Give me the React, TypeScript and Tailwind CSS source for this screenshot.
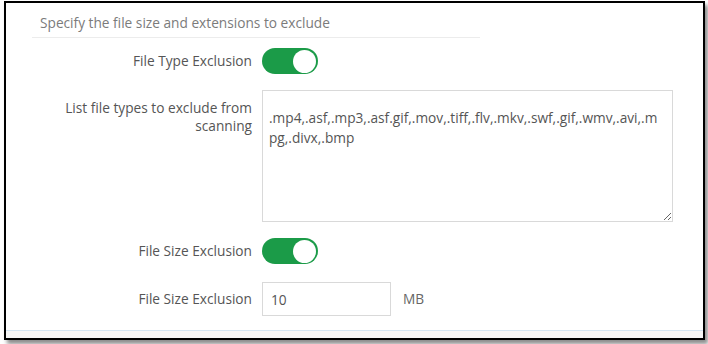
import React from 'react';

const fileTypes =
  '.mp4,.asf,.mp3,.asf.gif,.mov,.tiff,.flv,.mkv,.swf,.gif,.wmv,.avi,.mpg,.divx,.bmp';

const Toggle = ({ on }: { on: boolean }) => (
  <div
    className={`flex h-[26px] w-[56px] items-center rounded-full px-[2px] ${
      on ? 'justify-end bg-[#1b9b48]' : 'justify-start bg-[#cccccc]'
    }`}
  >
    <div className="h-[23px] w-[23px] rounded-full bg-white" />
  </div>
);

const App = () => {
  return (
    <div
      className="h-[344px] w-[708px] bg-white pl-[4px] pt-[1px]"
      style={{ fontFamily: '"Open Sans", "Noto Sans", sans-serif' }}
    >
      <div className="flex h-[339px] w-[701px] flex-col border-2 border-black bg-white shadow-[3px_4px_4px_rgba(0,0,0,0.45)]">
        <div className="flex-1">
          {/* Header */}
          <div className="ml-[26px] w-[448px] border-b border-[#ececec] pb-[4px] pl-[8px] pt-[10px] text-[13.7px] leading-[20px] text-[#7b7b7b]">
            Specify the file size and extensions to exclude
          </div>

          {/* Form rows */}
          <div className="grid grid-cols-[246px_1fr] gap-x-[10px] text-[13.7px] text-[#555555]">
            <div className="mt-[10px] text-right leading-[26px]">File Type Exclusion</div>
            <div className="mt-[10px]">
              <Toggle on />
            </div>

            <div className="mt-[16px] pt-[9px] text-right leading-[18px]">
              List file types to exclude from
              <br />
              scanning
            </div>
            <div className="mt-[16px]">
              <textarea
                readOnly
                value={fileTypes}
                className="block h-[132px] w-[411px] break-all border border-[#d9d9d9] pl-[6px] pr-[12px] pt-[17px] text-[13.7px] leading-[20px] text-[#555555] outline-none"
                style={{ fontFamily: '"Open Sans", "Noto Sans", sans-serif', wordBreak: 'break-all' }}
              />
            </div>

            <div className="mt-[16px] text-right leading-[26px]">File Size Exclusion</div>
            <div className="mt-[16px]">
              <Toggle on />
            </div>

            <div className="mt-[18px] text-right leading-[34px]">File Size Exclusion</div>
            <div className="mt-[18px] flex items-center gap-[12px]">
              <input
                readOnly
                value="10"
                className="h-[34px] w-[129px] border border-[#d9d9d9] px-[8px] text-[13.7px] text-[#555555] outline-none"
                style={{ fontFamily: '"Open Sans", "Noto Sans", sans-serif' }}
              />
              <span className="text-[#666666]">MB</span>
            </div>
          </div>
        </div>

        {/* Footer strip */}
        <div className="h-[8px] border-t border-[#d3e4f1] bg-[#f6f6f6]" />
      </div>
    </div>
  );
};

export default App;
